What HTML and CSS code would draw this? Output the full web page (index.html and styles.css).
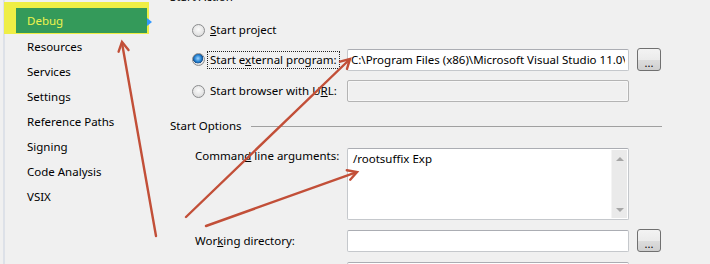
FILE: index.html
```html
<!DOCTYPE html>
<html>
<head>
    <title>Project Properties - Debug</title>
    <link rel="stylesheet" href="styles.css">
</head>
<body>
    <div class="page">
        <nav class="sidebar">
            <div class="nav-item active"><span class="nav-label">Debug</span></div>
            <div class="nav-item">Resources</div>
            <div class="nav-item">Services</div>
            <div class="nav-item">Settings</div>
            <div class="nav-item">Reference Paths</div>
            <div class="nav-item">Signing</div>
            <div class="nav-item">Code Analysis</div>
            <div class="nav-item">VSIX</div>
        </nav>

        <main class="content">
            <div class="group-title">Start Action</div>

            <div class="row row-project">
                <span class="radio"></span>
                <label class="radio-label"><u>S</u>tart project</label>
            </div>

            <div class="row row-external">
                <span class="radio checked"></span>
                <label class="radio-label focused">Start e<u>x</u>ternal program:</label>
                <div class="textbox"><span class="clip">C:\Program Files (x86)\Microsoft Visual Studio 11.0\Common7\IDE\devenv.exe</span></div>
                <button class="browse">...</button>
            </div>

            <div class="row row-url">
                <span class="radio"></span>
                <label class="radio-label">Start browser with U<u>R</u>L:</label>
                <div class="textbox disabled"></div>
            </div>

            <div class="group-title separated">
                <span>Start Options</span>
                <span class="rule"></span>
            </div>

            <div class="row row-args">
                <label class="field-label">Comman<u>d</u> line arguments:</label>
                <div class="textarea">
                    <div class="textarea-text">/rootsuffix Exp</div>
                    <div class="scrollbar">
                        <span class="scroll-up"></span>
                        <span class="scroll-down"></span>
                    </div>
                </div>
            </div>

            <div class="row row-workdir">
                <label class="field-label">Wor<u>k</u>ing directory:</label>
                <div class="textbox"></div>
                <button class="browse">...</button>
            </div>

            <div class="row row-next">
                <span></span>
                <div class="textbox"></div>
            </div>
        </main>

        <svg class="arrows" width="710" height="264" viewBox="0 0 710 264">
            <g fill="none" stroke="#c24f38" stroke-width="2.4" stroke-linecap="round" stroke-linejoin="miter">
                <line x1="156" y1="236" x2="122" y2="43"/>
                <polyline points="128.5,50 122,42 118.6,51.7"/>

                <line x1="186" y1="217" x2="349" y2="60"/>
                <polyline points="347,68.9 350,59 340,61.7"/>

                <line x1="206" y1="226" x2="356" y2="172.4"/>
                <polyline points="350.2,179.7 357,172 346.8,170.3"/>
            </g>
        </svg>
    </div>
</body>
</html>
```

FILE: styles.css
```css
body {
    margin: 0;
    padding: 0;
    background-color: #f0f0f0;
    font-family: "Noto Sans", "Open Sans", Arial, sans-serif;
    font-size: 11.5px;
    color: #000;
}

.page {
    position: relative;
    display: flex;
    width: 710px;
    height: 264px;
    overflow: hidden;
}

/* left navigation */

.sidebar {
    width: 155px;
    margin-left: 3px;
    border-left: 2px solid #dde1e8;
    flex-shrink: 0;
}

.nav-item {
    height: 25px;
    line-height: 25px;
    padding-left: 22px;
    white-space: nowrap;
}

.nav-item.active {
    position: relative;
    width: 145px;
    height: 32px;
    margin: 2px 0 0 -1px;
    padding: 6px 2px 1px 12px;
    box-sizing: border-box;
    background-color: #efee45;
}

.nav-label {
    display: block;
    height: 25px;
    line-height: 25px;
    padding-left: 11px;
    background-color: #349a5a;
    color: #eef24e;
}

.nav-item.active::after {
    content: "";
    position: absolute;
    right: -3px;
    top: 16px;
    border-style: solid;
    border-width: 4px 0 4px 5px;
    border-color: transparent transparent transparent #3399ff;
}

/* right side */

.content {
    width: 492px;
    padding-left: 10px;
}

.group-title {
    height: 16px;
    line-height: 16px;
    margin-top: -11px;
}

.group-title.separated {
    display: flex;
    align-items: center;
    margin-top: 16px;
}

.rule {
    flex: 1;
    height: 1px;
    margin-left: 9px;
    background-color: #a0a0a0;
}

.row {
    display: grid;
    grid-template-columns: 22px 155px 282px 32px;
    align-items: center;
    height: 22px;
}

.row-project { margin-top: 14px; }
.row-external { margin-top: 7px; }
.row-url { margin-top: 10px; }
.row-args { margin-top: 14px; height: 72px; align-items: start; }
.row-workdir { margin-top: 9px; }
.row-next { margin-top: 11px; align-items: start; }

.row-project,
.row-external,
.row-url {
    grid-template-columns: 22px 13px 142px 282px 32px;
}

.radio {
    grid-column: 2;
    width: 11px;
    height: 11px;
    border-radius: 50%;
    border: 1px solid #8b8c8e;
    background: radial-gradient(circle at 50% 40%, #fbfbfb 0%, #e6e6e6 55%, #cfcfcf 100%);
    box-sizing: content-box;
}

.radio.checked {
    background:
        radial-gradient(circle at 45% 40%, #9fd4ff 0%, #2a87d6 35%, #174f8c 55%, transparent 58%),
        radial-gradient(circle at 50% 40%, #fbfbfb 0%, #e6e6e6 55%, #cfcfcf 100%);
}

.radio-label {
    grid-column: 3;
    justify-self: start;
    margin-left: 2px;
    padding: 0 2px;
    line-height: 16px;
    border: 1px dotted transparent;
    white-space: nowrap;
}

.radio-label.focused {
    border-color: #222;
}

.field-label {
    grid-column: 2;
    padding-left: 3px;
    line-height: 16px;
    white-space: nowrap;
}

.row-project .textbox,
.row-external .textbox,
.row-url .textbox {
    grid-column: 4;
}

.textbox {
    grid-column: 3;
    height: 22px;
    box-sizing: border-box;
    border: 1px solid #c5c8cc;
    border-top-color: #abadb3;
    border-radius: 2px;
    background-color: #fff;
    padding: 0 3px;
    line-height: 20px;
    overflow: hidden;
}

.clip {
    display: block;
    white-space: nowrap;
    overflow: hidden;
}

.textbox.disabled {
    background-color: #f0f0f0;
    border-color: #b4b4b4;
    box-shadow: inset 0 0 0 1px #f7f7f7;
}

.browse {
    justify-self: end;
    width: 24px;
    height: 23px;
    padding: 6px 0 0;
    border: 1px solid #707070;
    border-radius: 3px;
    background: linear-gradient(#f3f3f3 0%, #ebebeb 50%, #dddddd 51%, #cfcfcf 100%);
    font-family: inherit;
    font-size: 11px;
    line-height: 14px;
    color: #000;
}

.textarea {
    grid-column: 3;
    position: relative;
    display: flex;
    height: 72px;
    box-sizing: border-box;
    border: 1px solid #c5c8cc;
    border-top-color: #abadb3;
    border-radius: 2px;
    background-color: #fff;
}

.textarea-text {
    flex: 1;
    padding: 2px 5px;
    line-height: 16px;
}

.scrollbar {
    width: 16px;
    margin: 1px 1px 1px 0;
    background-color: #eaeaea;
    border-left: 1px solid #f4f4f4;
    display: flex;
    flex-direction: column;
    justify-content: space-between;
    align-items: center;
    padding: 7px 0 6px;
    box-sizing: border-box;
}

.scroll-up,
.scroll-down {
    width: 0;
    height: 0;
    border-left: 4px solid transparent;
    border-right: 4px solid transparent;
}

.scroll-up {
    border-bottom: 4px solid #a6a6a6;
}

.scroll-down {
    border-top: 4px solid #a6a6a6;
}

.arrows {
    position: absolute;
    left: 0;
    top: 0;
    pointer-events: none;
}
```
